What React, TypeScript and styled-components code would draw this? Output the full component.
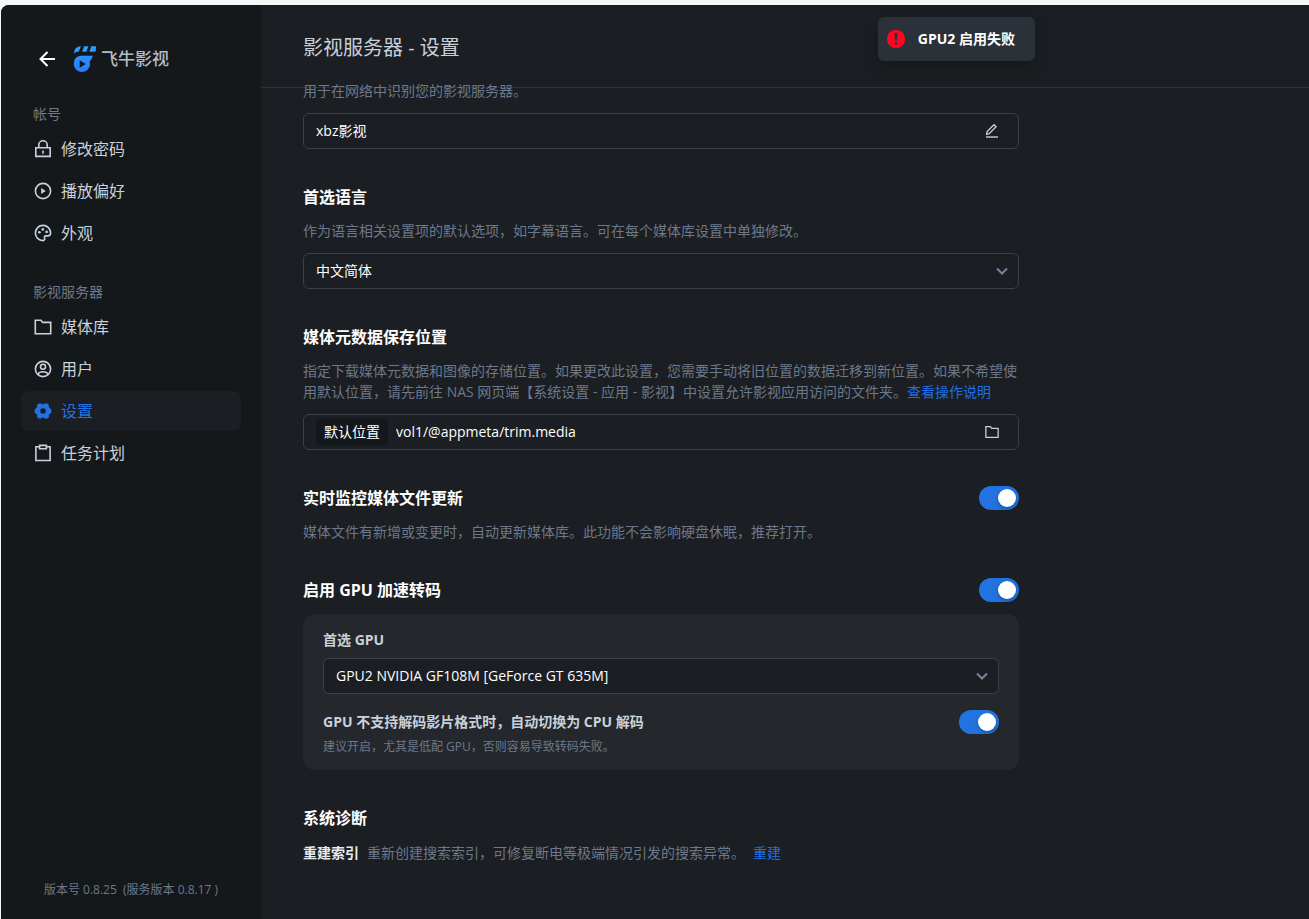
import React, { useState } from "react";
import styled, { createGlobalStyle } from "styled-components";

const GlobalStyle = createGlobalStyle`
  *, *::before, *::after { box-sizing: border-box; }
  body {
    margin: 0;
    background: #f6f6f6;
    color: #ffffff;
    font: 14px/21px "Open Sans", "Noto Sans CJK SC", sans-serif;
  }
  button, input, select { font: inherit; color: inherit; }
  h1, h2, p { margin: 0; }
`;

const Frame = styled.div`
  padding: 5px 0 0 1px;
`;

const Shell = styled.div`
  position: relative;
  display: flex;
  min-height: calc(100vh - 5px);
  background: #1b1e22;
  border-top-left-radius: 8px;
  overflow: hidden;
`;

const Sidebar = styled.aside`
  flex: none;
  display: flex;
  flex-direction: column;
  width: 260px;
  padding: 34px 20px 18px;
  background: #14181a;
`;

const Brand = styled.div`
  display: flex;
  align-items: center;
  height: 40px;
  padding-left: 14px;
  margin-bottom: 24px;
`;

const IconButton = styled.button<{ $size: number }>`
  flex: none;
  display: grid;
  place-items: center;
  width: ${(p) => p.$size}px;
  height: ${(p) => p.$size}px;
  padding: 0;
  border: 0;
  background: none;
  color: #c9d1db;
  cursor: pointer;
`;

const Logo = styled.a`
  display: flex;
  align-items: center;
  gap: 4px;
  margin-left: 14px;
  color: #b4bcc8;
  font-size: 17px;
  font-style: oblique 8deg;
  font-weight: 500;
  line-height: 24px;
  text-decoration: none;
`;

const NavGroup = styled.nav`
  display: flex;
  flex-direction: column;
  gap: 2px;
  margin-bottom: 28px;
`;

const NavLabel = styled.p`
  padding-left: 12px;
  margin-bottom: 2px;
  line-height: 22px;
  color: #6c798c;
`;

const NavItem = styled.a<{ $active?: boolean }>`
  display: flex;
  align-items: center;
  gap: 8px;
  height: 40px;
  padding: 0 12px;
  border-radius: 8px;
  background: ${(p) => (p.$active ? "#1b1e22" : "transparent")};
  color: ${(p) => (p.$active ? "#2273e1" : "#c9d1db")};
  font-size: 16px;
  line-height: 24px;
  text-decoration: none;
`;

const Version = styled.p`
  margin-top: auto;
  color: #6c798c;
  font-size: 12px;
  line-height: 22px;
  text-align: center;
  white-space: pre;
`;

const Main = styled.main`
  flex: 1;
  min-width: 0;
`;

const Header = styled.header`
  display: flex;
  align-items: center;
  height: 83px;
  padding: 4px 42px 0;
  border-bottom: 1px solid #2e3338;
`;

const PageTitle = styled.h1`
  color: #c9d1db;
  font-size: 20px;
  font-weight: 400;
  line-height: 28px;
`;

const Content = styled.form`
  position: relative;
  display: flex;
  flex-direction: column;
  gap: 36px;
  max-width: 800px;
  padding: 0 42px 48px;
  margin-top: -8px;
`;

const Section = styled.section`
  display: flex;
  flex-direction: column;
`;

const TitleRow = styled.div`
  display: flex;
  align-items: center;
  justify-content: space-between;
  min-height: 24px;
`;

const Title = styled.h2`
  font-size: 16px;
  font-weight: 700;
  line-height: 24px;
`;

const Hint = styled.p`
  padding-top: 11px;
  color: #6c798c;
`;

const FirstHint = styled(Hint)`
  padding-top: 0;
`;

const TextLink = styled.a`
  color: #1f6fe6;
  text-decoration: none;
`;

const Field = styled.div`
  display: flex;
  align-items: center;
  height: 36px;
  padding: 0 14px 0 12px;
  margin-top: 12px;
  border: 1px solid #37424a;
  border-radius: 6px;
`;

const TextInput = styled.input`
  flex: 1;
  min-width: 0;
  padding: 0 0 2px;
  border: 0;
  outline: 0;
  background: none;
`;

const Tag = styled.span`
  padding: 0 8px;
  margin-right: 8px;
  border-radius: 4px;
  background: #14181a;
  line-height: 26px;
`;

const SelectBox = styled.div`
  position: relative;
  margin-top: 12px;

  svg {
    position: absolute;
    top: 12px;
    right: 11px;
    pointer-events: none;
  }
`;

const Select = styled.select`
  display: block;
  width: 100%;
  height: 36px;
  padding: 0 36px 2px 12px;
  border: 1px solid #37424a;
  border-radius: 6px;
  appearance: none;
  background: #1b1e22;
`;

const Toggle = styled.input`
  flex: none;
  display: flex;
  align-items: center;
  width: 40px;
  height: 24px;
  padding: 0 3px;
  margin: 0;
  border-radius: 12px;
  appearance: none;
  background: #4a525a;
  cursor: pointer;

  &::before {
    content: "";
    width: 18px;
    height: 18px;
    border-radius: 9px;
    background: #ffffff;
    box-shadow: 0 2px 4px rgba(0, 0, 0, 0.25);
  }

  &:checked {
    justify-content: flex-end;
    background: #2273e1;
  }
`;

const Panel = styled.div`
  padding: 16px 20px 14px;
  margin-top: 12px;
  border-radius: 12px;
  background: #24272b;

  ${SelectBox} {
    margin: 8px 0 16px;
  }
`;

const PanelLabel = styled.label`
  display: block;
  color: #c9d1db;
  font-weight: 700;
  line-height: 20px;
`;

const SmallHint = styled.p`
  margin-top: 4px;
  color: #6c798c;
  font-size: 12px;
  line-height: 18px;
`;

const DiagnosticRow = styled.p`
  display: flex;
  gap: 8px;
  margin-top: 12px;
  color: #6c798c;

  strong { color: #e8ecf0; }
`;

const Toast = styled.div`
  position: absolute;
  top: 12px;
  right: 274px;
  display: flex;
  align-items: center;
  gap: 12px;
  height: 44px;
  padding: 0 20px 0 8px;
  border-radius: 6px;
  background: #2a3138;
  box-shadow: 0 6px 16px rgba(0, 0, 0, 0.2);
  font-weight: 700;

  span { padding-bottom: 2px; }
`;

type IconProps = { children: React.ReactNode; size?: number; width?: number };

const Icon = ({ children, size = 20, width = 1.6 }: IconProps) => (
  <svg width={size} height={size} viewBox="0 0 20 20" fill="none" stroke="currentColor" strokeWidth={width} aria-hidden="true">
    {children}
  </svg>
);

const LockIcon = () => (
  <Icon>
    <path d="M2.8 8.8h14.4v8.6H2.8zM5.8 8.8V6a4.2 4.2 0 0 1 8.4 0v2.8M10 11.4v3.4" />
  </Icon>
);

const PlayIcon = () => (
  <Icon>
    <circle cx="10" cy="10" r="7.6" />
    <path d="M8.2 7.1v5.8l4.6-2.9z" fill="currentColor" stroke="none" />
  </Icon>
);

const PaletteIcon = () => (
  <Icon>
    <path d="M10 17.6A7.6 7.6 0 1 1 17.6 10c0 2-1.3 2.9-2.9 2.9h-2.1c-1 0-1.4.8-1.1 1.6.4 1.2.3 3.1-1.5 3.1z" />
    <g fill="currentColor" stroke="none">
      <circle cx="6.4" cy="9.2" r="1.3" />
      <circle cx="9.8" cy="6.4" r="1.3" />
      <circle cx="13.6" cy="8.9" r="1.3" />
    </g>
  </Icon>
);

const FolderIcon = ({ size }: { size?: number }) => (
  <Icon size={size}>
    <path d="M2.3 3.3h5.6l1.8 2.1h8v11.3H2.3z" />
  </Icon>
);

const UserIcon = () => (
  <Icon>
    <circle cx="10" cy="10" r="7.6" />
    <circle cx="10" cy="7.7" r="2.5" />
    <path d="M4.6 15.3c1.2-2 3-2.6 5.4-2.6s4.2.6 5.4 2.6" />
  </Icon>
);

const GearIcon = () => (
  <svg width="20" height="20" viewBox="0 0 20 20" aria-hidden="true">
    <path
      fill="currentColor"
      fillRule="evenodd"
      d="M6.600 2.200Q7.400 2 7.900 2.600Q8.800 3.400 10 3.400T12.100 2.600Q12.600 2 13.400 2.200L15.400 3.300Q16 3.700 15.900 4.400Q15.600 5.700 16.200 6.600Q16.700 7.400 17.700 7.800Q18.300 8.100 18.400 8.800V11.200Q18.300 11.900 17.700 12.200Q16.700 12.600 16.200 13.400Q15.600 14.300 15.900 15.600Q16 16.300 15.400 16.700L13.400 17.800Q12.600 18 12.100 17.400Q11.200 16.600 10 16.600T7.900 17.400Q7.400 18 6.600 17.800L4.600 16.700Q4 16.300 4.100 15.600Q4.400 14.300 3.800 13.400Q3.300 12.600 2.300 12.200Q1.700 11.900 1.600 11.200V8.800Q1.700 8.100 2.300 7.800Q3.300 7.400 3.800 6.600Q4.400 5.700 4.100 4.400Q4 3.700 4.600 3.300ZM10 7.200a2.800 2.800 0 1 0 0 5.600 2.800 2.800 0 0 0 0-5.600z"
    />
  </svg>
);

const ClipboardIcon = () => (
  <Icon>
    <path d="M6.600 3.700H2.900v13.800h14.200V3.700h-3.700M6.600 2.400h6.800v3.400H6.600z" />
  </Icon>
);

const PencilIcon = () => (
  <svg width="14" height="16" viewBox="0 0 14 16" fill="none" stroke="currentColor" aria-hidden="true">
    <path d="M1.600 11.300l.5-2.700 6.900-6.900 2.100 2.100-6.900 6.900z" strokeWidth="1.300" />
    <path d="M1 14h12" strokeWidth="2" stroke="#8d97a5" />
  </svg>
);

const ChevronIcon = () => (
  <svg width="12" height="12" viewBox="0 0 12 12" fill="none" stroke="#7886a0" strokeWidth="2" aria-hidden="true">
    <path d="M1 3.500l5 5 5-5" />
  </svg>
);

const BackIcon = () => (
  <svg width="18" height="18" viewBox="0 0 18 18" fill="none" stroke="#ffffff" strokeWidth="2" aria-hidden="true">
    <path d="M17 9H2.500M9.500 2L2.500 9l7 7" />
  </svg>
);

const ErrorIcon = () => (
  <svg width="20" height="20" viewBox="0 0 20 20" aria-hidden="true">
    <circle cx="10" cy="10" r="9.200" fill="#ff0522" />
    <path d="M8.600 5.200a1.400 1.400 0 0 1 2.800 0l-.3 6.200H8.900z" fill="#2a3138" />
    <circle cx="10" cy="14.200" r="1.200" fill="#2a3138" />
  </svg>
);

const LogoMark = () => (
  <svg width="24" height="28" viewBox="0 0 24 28" aria-hidden="true">
    <defs>
      <linearGradient id="mark" x1="0" y1="0" x2="0" y2="28" gradientUnits="userSpaceOnUse">
        <stop offset="0" stopColor="#2ba2ff" />
        <stop offset="1" stopColor="#2a78ff" />
      </linearGradient>
    </defs>
    <g fill="url(#mark)">
      <path d="M.8 8.400Q1 1.500 7.900 1.200L5.900 6.600Q3.100 6.800.8 8.400z" />
      <path d="M11.100 1.200h4.300l-2 5.600H9.100z" />
      <path d="M18.300 1.200H22.900V5.300Q22.700 6.800 21.200 6.800h-4.900z" />
      <path
        fillRule="evenodd"
        d="M8 10.700H20L18 15Q17.500 16 16.600 16.200Q17 17.500 17 18.900A8.100 8.100 0 0 1 .8 18.900Q.8 11 8 10.700zM6.700 15.300v7.400l6.100-3.700z"
      />
    </g>
  </svg>
);

const accountItems = [
  { text: "修改密码", icon: <LockIcon /> },
  { text: "播放偏好", icon: <PlayIcon /> },
  { text: "外观", icon: <PaletteIcon /> },
];

const serverItems = [
  { text: "媒体库", icon: <FolderIcon /> },
  { text: "用户", icon: <UserIcon /> },
  { text: "设置", icon: <GearIcon />, active: true },
  { text: "任务计划", icon: <ClipboardIcon /> },
];

type NavEntry = { text: string; icon: React.ReactNode; active?: boolean };

const Nav = ({ label, items }: { label: string; items: NavEntry[] }) => (
  <NavGroup aria-label={label}>
    <NavLabel>{label}</NavLabel>
    {items.map((item) => (
      <NavItem key={item.text} href="#" $active={item.active} aria-current={item.active ? "page" : undefined}>
        {item.icon}
        {item.text}
      </NavItem>
    ))}
  </NavGroup>
);

export default function App() {
  const [name, setName] = useState("xbz影视");

  return (
    <Frame>
      <GlobalStyle />
      <Shell>
        <Sidebar>
          <Brand>
            <IconButton $size={24} aria-label="返回">
              <BackIcon />
            </IconButton>
            <Logo href="#">
              <LogoMark />
              飞牛影视
            </Logo>
          </Brand>
          <Nav label="帐号" items={accountItems} />
          <Nav label="影视服务器" items={serverItems} />
          <Version>{"版本号 0.8.25  (服务版本 0.8.17 )"}</Version>
        </Sidebar>

        <Main>
          <Header>
            <PageTitle>影视服务器 - 设置</PageTitle>
          </Header>

          <Content onSubmit={(e) => e.preventDefault()}>
            <Section>
              <FirstHint id="name-hint">用于在网络中识别您的影视服务器。</FirstHint>
              <Field>
                <TextInput aria-labelledby="name-hint" value={name} onChange={(e) => setName(e.target.value)} />
                <IconButton type="button" $size={24} aria-label="编辑">
                  <PencilIcon />
                </IconButton>
              </Field>
            </Section>

            <Section>
              <Title>
                <label htmlFor="language">首选语言</label>
              </Title>
              <Hint>作为语言相关设置项的默认选项，如字幕语言。可在每个媒体库设置中单独修改。</Hint>
              <SelectBox>
                <Select id="language">
                  <option>中文简体</option>
                </Select>
                <ChevronIcon />
              </SelectBox>
            </Section>

            <Section>
              <Title>
                <label htmlFor="path">媒体元数据保存位置</label>
              </Title>
              <Hint>
                指定下载媒体元数据和图像的存储位置。如果更改此设置，您需要手动将旧位置的数据迁移到新位置。如果不希望使用默认位置，请先前往 NAS 网页端【系统设置 - 应用 - 影视】中设置允许影视应用访问的文件夹。
                <TextLink href="#">查看操作说明</TextLink>
              </Hint>
              <Field>
                <Tag>默认位置</Tag>
                <TextInput id="path" readOnly value="vol1/@appmeta/trim.media" />
                <IconButton type="button" $size={24} aria-label="选择文件夹">
                  <FolderIcon size={16} />
                </IconButton>
              </Field>
            </Section>

            <Section>
              <TitleRow>
                <Title>
                  <label htmlFor="watch">实时监控媒体文件更新</label>
                </Title>
                <Toggle id="watch" type="checkbox" defaultChecked />
              </TitleRow>
              <Hint>媒体文件有新增或变更时，自动更新媒体库。此功能不会影响硬盘休眠，推荐打开。</Hint>
            </Section>

            <Section>
              <TitleRow>
                <Title>
                  <label htmlFor="gpu-enabled">启用 GPU 加速转码</label>
                </Title>
                <Toggle id="gpu-enabled" type="checkbox" defaultChecked />
              </TitleRow>
              <Panel>
                <PanelLabel htmlFor="gpu">首选 GPU</PanelLabel>
                <SelectBox>
                  <Select id="gpu">
                    <option>GPU2 NVIDIA GF108M [GeForce GT 635M]</option>
                  </Select>
                  <ChevronIcon />
                </SelectBox>
                <TitleRow>
                  <PanelLabel htmlFor="fallback">GPU 不支持解码影片格式时，自动切换为 CPU 解码</PanelLabel>
                  <Toggle id="fallback" type="checkbox" defaultChecked />
                </TitleRow>
                <SmallHint>建议开启，尤其是低配 GPU，否则容易导致转码失败。</SmallHint>
              </Panel>
            </Section>

            <Section>
              <Title>系统诊断</Title>
              <DiagnosticRow>
                <strong>重建索引</strong>
                <span>重新创建搜索索引，可修复断电等极端情况引发的搜索异常。</span>
                <TextLink href="#">重建</TextLink>
              </DiagnosticRow>
            </Section>
          </Content>
        </Main>

        <Toast role="alert">
          <ErrorIcon />
          <span>GPU2 启用失败</span>
        </Toast>
      </Shell>
    </Frame>
  );
}
